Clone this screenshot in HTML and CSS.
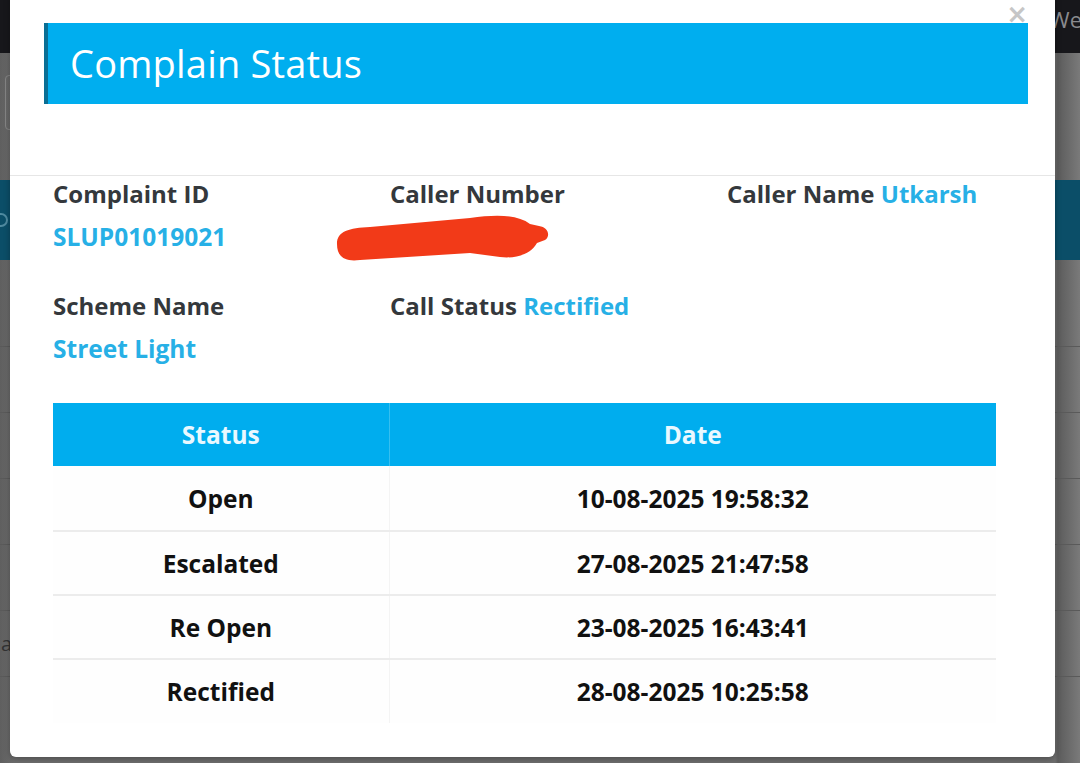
FILE: index.html
```html
<!DOCTYPE html>
<html lang="en">
<head>
<meta charset="utf-8">
<title>Complain Status</title>
<link rel="stylesheet" href="styles.css">
</head>
<body>
<div class="page">
  <div class="topnav"><span class="nav-text">We</span></div>
  <div class="page-main">
    <div class="search-box"></div>
    <div class="band"><span class="band-icon"></span></div>
    <div class="bg-rows">
      <div class="bg-row"></div>
      <div class="bg-row"></div>
      <div class="bg-row"></div>
      <div class="bg-row"></div>
      <div class="bg-row"><span class="bg-text">ar</span></div>
      <div class="bg-row"></div>
    </div>
  </div>
</div>

<div class="modal">
  <button class="close">&times;</button>
  <div class="modal-head">
    <h1 class="title">Complain Status</h1>
  </div>
  <div class="modal-body">
    <div class="info-grid">
      <div class="info">
        <div class="label">Complaint ID</div>
        <div class="value">SLUP01019021</div>
      </div>
      <div class="info">
        <div class="label">Caller Number</div>
        <div class="value">
          <svg class="scribble" width="220" height="50" viewBox="335 210 220 50">
            <path d="M337,242 C337,229 349,226 370,225 L470,216 C498,212 518,213 530,222 L539,224 C548,225 551,234 545,238 L537,241 C531,252 516,257 500,255 L470,251 L360,258 C345,260 337,255 337,242 Z" fill="#f23a18"/>
          </svg>
        </div>
      </div>
      <div class="info">
        <div class="label">Caller Name <span class="inline-value">Utkarsh</span></div>
      </div>
      <div class="info">
        <div class="label">Scheme Name</div>
        <div class="value">Street Light</div>
      </div>
      <div class="info">
        <div class="label">Call Status <span class="inline-value">Rectified</span></div>
      </div>
    </div>

    <table class="status-table">
      <thead>
        <tr><th>Status</th><th>Date</th></tr>
      </thead>
      <tbody>
        <tr><td>Open</td><td>10-08-2025 19:58:32</td></tr>
        <tr><td>Escalated</td><td>27-08-2025 21:47:58</td></tr>
        <tr><td>Re Open</td><td>23-08-2025 16:43:41</td></tr>
        <tr><td>Rectified</td><td>28-08-2025 10:25:58</td></tr>
      </tbody>
    </table>
  </div>
</div>
</body>
</html>
```

FILE: styles.css
```css
* { box-sizing: border-box; }

html, body {
  margin: 0;
  padding: 0;
  width: 1080px;
  height: 763px;
  overflow: hidden;
  font-family: "Open Sans", "Liberation Sans", sans-serif;
  background: #6b6b6b;
}

/* ---------- dimmed page behind the modal ---------- */
.page {
  width: 1080px;
  height: 763px;
  display: flex;
  flex-direction: column;
  background: linear-gradient(90deg, #5f5f5f 0, #6e6e6e 15px, #6e6e6e 1055px, #5c5c5c 1058px, #7a7a7a 1080px);
}
.topnav {
  height: 53px;
  background: #17171b;
  display: flex;
  justify-content: flex-end;
  align-items: flex-start;
  padding-top: 4px;
}
.nav-text {
  color: #8a8a8e;
  font-size: 22px;
  line-height: 30px;
  white-space: nowrap;
  margin-right: -2px;
}
.page-main {
  flex: 1;
  display: flex;
  flex-direction: column;
}
.search-box {
  margin: 22px 0 0 5px;
  width: 40px;
  height: 55px;
  border: 1px solid #858585;
  border-radius: 4px;
}
.band {
  margin-top: 50px;
  height: 80px;
  background: #0b4e68;
  display: flex;
  align-items: center;
}
.band-icon {
  width: 14px;
  height: 14px;
  border: 2px solid #4f8aa0;
  border-radius: 50%;
  margin-left: -6px;
}
.bg-rows {
  margin-top: 86px;
  display: flex;
  flex-direction: column;
}
.bg-row {
  height: 66px;
  border-top: 1px solid #5a5a5a;
  display: flex;
  align-items: center;
}
.bg-text {
  color: #333;
  font-size: 20px;
  line-height: 24px;
  padding-left: 1px;
}

/* ---------- modal ---------- */
.modal {
  position: absolute;
  left: 10px;
  top: -8px;
  width: 1045px;
  height: 765px;
  background: #ffffff;
  border-radius: 6px;
  box-shadow: 0 2px 6px rgba(0,0,0,0.3);
}
.close {
  position: absolute;
  top: 10px;
  right: 27px;
  border: 0;
  background: transparent;
  padding: 0;
  color: #c6c6c6;
  font-family: "DejaVu Sans", sans-serif;
  font-weight: bold;
  font-size: 26px;
  line-height: 24px;
  cursor: pointer;
}
.modal-head {
  padding: 31px 27px 71px 34px;
  border-bottom: 1px solid #e6e6e6;
}
.title {
  margin: 0;
  height: 81px;
  background: #00aeef;
  border-left: 4px solid #0a6f95;
  color: #ffffff;
  font-family: "Open Sans", sans-serif;
  font-weight: 500;
  font-size: 38px;
  line-height: 81px;
  padding-left: 22px;
  letter-spacing: 0.2px;
}
.modal-body {
  padding: 0 59px 0 43px;
}
.info-grid {
  display: grid;
  grid-template-columns: 337px 337px 269px;
  row-gap: 26px;
}
.info {
  display: flex;
  flex-direction: column;
}
.label {
  color: #34383c;
  font-weight: 700;
  font-size: 24px;
  line-height: 36px;
  white-space: nowrap;
}
.value, .inline-value {
  color: #27b0e6;
  font-weight: 700;
}
.value {
  font-size: 24.5px;
  line-height: 50px;
  height: 50px;
  position: relative;
}
.scribble {
  position: absolute;
  left: -55px;
  top: 0px;
}

/* ---------- table ---------- */
.status-table {
  margin-top: 29px;
  width: 943px;
  border-collapse: collapse;
  font-size: 24.5px;
  font-weight: 700;
  text-align: center;
}
.status-table th {
  height: 63px;
  background: #00adee;
  color: #e9f8ff;
  font-weight: 700;
  padding: 0;
}
.status-table th:first-child {
  width: 336px;
  border-right: 1px solid #36bff0;
}
.status-table td {
  height: 64px;
  padding: 0;
  color: #111111;
  border-top: 2px solid #ececec;
  background: #fefefe;
}
.status-table tbody tr:first-child td {
  border-top: 0;
  height: 65px;
}
.status-table td:first-child {
  border-right: 1px solid #f4f4f4;
}
```
